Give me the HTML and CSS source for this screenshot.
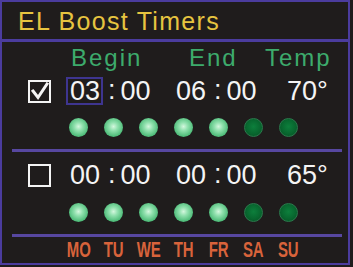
FILE: index.html
```html
<!DOCTYPE html>
<html lang="en">
<head>
    <meta charset="UTF-8">
    <title>EL Boost Timers</title>
    <link rel="stylesheet" href="styles.css">
</head>
<body>
    <div class="frame">
        <div class="header">EL Boost Timers</div>

        <div class="labels">
            <span class="lbl-begin">Begin</span>
            <span class="lbl-end">End</span>
            <span class="lbl-temp">Temp</span>
        </div>

        <div class="times">
            <div class="checkbox">
                <svg viewBox="0 0 23 23" width="23" height="23">
                    <polyline points="5,11 10,17.5 19,4" fill="none" stroke="#f4f4f4" stroke-width="3" stroke-linecap="square"/>
                </svg>
            </div>
            <div class="time t-begin"><span class="hh selected">03</span><span class="colon">:</span><span>00</span></div>
            <div class="time t-end"><span class="hh">06</span><span class="colon">:</span><span>00</span></div>
            <div class="temp">70°</div>
        </div>
        <div class="dots">
            <span class="dot on"></span>
            <span class="dot on"></span>
            <span class="dot on"></span>
            <span class="dot on"></span>
            <span class="dot on"></span>
            <span class="dot off"></span>
            <span class="dot off"></span>
        </div>

        <div class="divider"></div>

        <div class="times second">
            <div class="checkbox"></div>
            <div class="time t-begin"><span class="hh">00</span><span class="colon">:</span><span>00</span></div>
            <div class="time t-end"><span class="hh">00</span><span class="colon">:</span><span>00</span></div>
            <div class="temp">65°</div>
        </div>
        <div class="dots dots-second">
            <span class="dot on"></span>
            <span class="dot on"></span>
            <span class="dot on"></span>
            <span class="dot on"></span>
            <span class="dot on"></span>
            <span class="dot off"></span>
            <span class="dot off"></span>
        </div>

        <div class="divider"></div>

        <div class="days">
            <span><b>MO</b></span>
            <span><b>TU</b></span>
            <span><b>WE</b></span>
            <span><b>TH</b></span>
            <span><b>FR</b></span>
            <span><b>SA</b></span>
            <span><b>SU</b></span>
        </div>
    </div>
</body>
</html>
```

FILE: styles.css
```css
/* Page */
body {
    margin: 0;
    padding: 0;
    background: #1f1c1c;
    font-family: 'Liberation Sans', Arial, sans-serif;
}

/* Outer frame */
.frame {
    width: 346px;
    height: 261px;
    border: 2px solid #4b3c9e;
    background: #1f1c1c;
    display: flex;
    flex-direction: column;
}

/* Title bar */
.header {
    height: 37px;
    border-bottom: 3px solid #4b3c9e;
    padding-left: 16px;
    box-sizing: border-box;
    height: 40px;
    font-size: 25px;
    line-height: 25px;
    padding-top: 7px;
    letter-spacing: 1.3px;
    color: #e6c440;
}

/* Column labels */
.labels {
    height: 34px;
    box-sizing: border-box;
    padding-top: 4px;
    display: grid;
    grid-template-columns: 69px 118px 76px 1fr;
    font-size: 24px;
    line-height: 24px;
    letter-spacing: 2px;
    color: #3dab6c;
}

.lbl-begin {
    grid-column: 2;
}

.lbl-end {
    grid-column: 3;
}

.lbl-temp {
    grid-column: 4;
}

/* Time rows */
.times {
    height: 30px;
    display: grid;
    grid-template-columns: 64px 110px 111px 1fr;
    align-items: center;
    font-size: 27px;
    color: #f4f4f4;
}

.times.second {
    margin-top: 8px;
}

.checkbox {
    width: 23px;
    height: 23px;
    margin-left: 26px;
    box-sizing: border-box;
    border: 2px solid #f4f4f4;
    position: relative;
}

.checkbox svg {
    position: absolute;
    top: -2px;
    left: -2px;
}

.time {
    display: flex;
    align-items: center;
    line-height: 24px;
}

.hh {
    display: inline-block;
    border: 2px solid transparent;
    padding: 0 1px 0 2px;
    margin-left: -4px;
}

.hh.selected {
    border-color: #3e3590;
}

.t-begin .hh {
    margin-left: 0;
}

.t-end .hh {
    margin-left: -4px;
}

.colon {
    margin: 0 5px;
    position: relative;
    top: -1px;
}

.temp {
    line-height: 28px;
}

/* Day indicator dots */
.dots {
    height: 43px;
    display: flex;
    align-items: center;
    gap: 16px;
    padding-left: 67px;
}

.dots-second {
    height: 44px;
}

.dot {
    width: 19px;
    height: 19px;
    border-radius: 50%;
    box-sizing: border-box;
}

.dot.on {
    background: radial-gradient(circle at 50% 45%, #d4f7de 0%, #8fe0ad 30%, #4dbb78 70%, #35a262 100%);
}

.dot.off {
    background: radial-gradient(circle at 50% 45%, #0d7f3c 0%, #08672f 55%, #054f22 100%);
    border: 1px solid #2a7a4c;
}

/* Separators */
.divider {
    height: 3px;
    margin: 0 6px 0 10px;
    background: #5747a0;
}

/* Weekday legend */
.days {
    height: 26px;
    box-sizing: border-box;
    padding-top: 2px;
    padding-left: 59px;
    display: flex;
    font-size: 22px;
    line-height: 22px;
    color: #d8633b;
}

.days span {
    width: 35px;
    text-align: center;
}

.days b {
    display: inline-block;
    transform: scaleX(0.68);
}
```
